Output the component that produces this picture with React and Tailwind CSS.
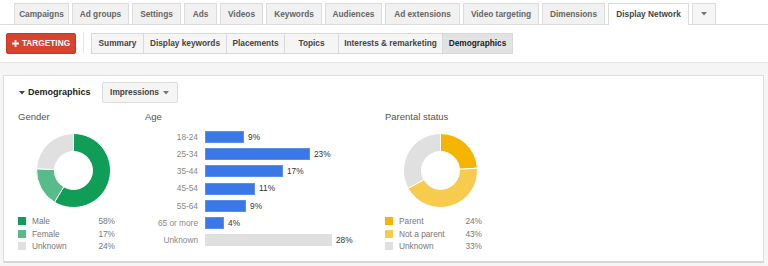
import React from "react";

const tabs = [
  { label: "Campaigns", w: "w-[55px]" },
  { label: "Ad groups", w: "w-[57px]" },
  { label: "Settings", w: "w-[49px]" },
  { label: "Ads", w: "w-[33px]" },
  { label: "Videos", w: "w-[43px]" },
  { label: "Keywords", w: "w-[56px]" },
  { label: "Audiences", w: "w-[57px]" },
  { label: "Ad extensions", w: "w-[75px]" },
  { label: "Video targeting", w: "w-[76px]" },
  { label: "Dimensions", w: "w-[63px]" },
  { label: "Display Network", w: "w-[81px]", active: true },
];

const subTabs = [
  { label: "Summary", w: "w-[53px]" },
  { label: "Display keywords", w: "w-[83px]" },
  { label: "Placements", w: "w-[58px]" },
  { label: "Topics", w: "w-[54px]" },
  { label: "Interests & remarketing", w: "w-[104px]" },
  { label: "Demographics", w: "w-[70px]", active: true },
];

const gender = [
  { label: "Male", value: 58, color: "#0f9d58", sq: "bg-[#0f9d58]" },
  { label: "Female", value: 17, color: "#57bb8a", sq: "bg-[#57bb8a]" },
  { label: "Unknown", value: 24, color: "#e0e0e0", sq: "bg-[#e0e0e0]" },
];

const parental = [
  { label: "Parent", value: 24, color: "#f4b400", sq: "bg-[#f4b400]" },
  { label: "Not a parent", value: 43, color: "#f7cb4d", sq: "bg-[#f7cb4d]" },
  { label: "Unknown", value: 33, color: "#e0e0e0", sq: "bg-[#e0e0e0]" },
];

const ages = [
  { label: "18-24", value: 9, w: 39 },
  { label: "25-34", value: 23, w: 105 },
  { label: "35-44", value: 17, w: 78 },
  { label: "45-54", value: 11, w: 50 },
  { label: "55-64", value: 9, w: 41 },
  { label: "65 or more", value: 4, w: 19 },
  { label: "Unknown", value: 28, w: 127, grey: true },
];

function pt(cx, cy, rad, t) {
  const a = 2 * Math.PI * t;
  return [cx + rad * Math.sin(a), cy - rad * Math.cos(a)];
}

function sector(cx, cy, R, r, t0, t1) {
  const large = t1 - t0 > 0.5 ? 1 : 0;
  const [x0, y0] = pt(cx, cy, R, t0);
  const [x1, y1] = pt(cx, cy, R, t1);
  const [x2, y2] = pt(cx, cy, r, t1);
  const [x3, y3] = pt(cx, cy, r, t0);
  return `M${x0} ${y0} A${R} ${R} 0 ${large} 1 ${x1} ${y1} L${x2} ${y2} A${r} ${r} 0 ${large} 0 ${x3} ${y3} Z`;
}

function Donut({ data }) {
  const total = data.reduce((s, d) => s + d.value, 0);
  let acc = 0;
  return (
    <svg width="75" height="75" viewBox="0 0 75 75">
      {data.map((d) => {
        const t0 = acc / total;
        acc += d.value;
        const t1 = acc / total;
        return (
          <path key={d.label} d={sector(37.5, 37.5, 37, 19, t0, t1)} fill={d.color} stroke="#fff" strokeWidth="1" />
        );
      })}
    </svg>
  );
}

function PieBlock({ title, data }) {
  return (
    <div className="w-[97px] flex flex-col">
      <div className="h-[12px] leading-[12px] text-[9.5px] text-[#555]">{title}</div>
      <div className="mt-[10px] ml-[18px]">
        <Donut data={data} />
      </div>
      <div className="mt-[7px] flex flex-col">
        {data.map((d) => (
          <div key={d.label} className="h-[12.5px] flex items-center text-[8.3px] text-[#777]">
            <div className={`w-[8px] h-[8px] ${d.sq}`} />
            <span className="ml-[6px] flex-1">{d.label}</span>
            <span>{d.value}%</span>
          </div>
        ))}
      </div>
    </div>
  );
}

export default function App() {
  return (
    <div className="w-[768px] h-[266px] bg-white overflow-hidden font-['Liberation_Sans',Arial,sans-serif] flex flex-col">
      {/* Top tabs */}
      <div className="h-[25px] shrink-0 border-b border-[#dcdcdc] flex items-end pl-[14px] gap-[3px]">
        {tabs.map((t) => (
          <div
            key={t.label}
            className={`${t.w} flex items-center justify-center border border-b-0 border-[#dcdcdc] text-[8.3px] font-bold ${
              t.active ? "h-[22px] -mb-px bg-white text-[#444]" : "h-[21px] bg-[#f1f1f1] text-[#666]"
            }`}
          >
            {t.label}
          </div>
        ))}
        <div className="w-[24px] h-[21px] border border-b-0 border-[#dcdcdc] bg-[#f6f6f6] flex items-center justify-center">
          <svg width="6" height="4" viewBox="0 0 6 4">
            <path d="M0 0h6L3 3.5z" fill="#777" />
          </svg>
        </div>
      </div>

      {/* Sub tabs */}
      <div className="mt-[8px] h-[21px] shrink-0 flex items-stretch">
        <div className="ml-[6px] w-[70px] bg-[#d8432f] border border-[#c53727] rounded-[2px] flex items-center justify-center text-white text-[8.3px] font-bold">
          <svg width="7" height="7" viewBox="0 0 7 7" className="mr-[3px]">
            <path d="M2.6 0h1.8v2.6H7v1.8H4.4V7H2.6V4.4H0V2.6h2.6z" fill="#fff" />
          </svg>
          TARGETING
        </div>
        <div className="ml-[7px] w-px -mt-px h-[22px] bg-[#e6e6e6]" />
        <div className="ml-[7px] flex">
          {subTabs.map((t, i) => (
            <div
              key={t.label}
              className={`${t.w} flex items-center justify-center border border-[#d9d9d9] text-[8.3px] font-bold ${
                i > 0 ? "border-l-0" : ""
              } ${t.active ? "bg-[#e2e2e2] text-[#222]" : "bg-[#f5f5f5] text-[#444]"}`}
            >
              {t.label}
            </div>
          ))}
        </div>
      </div>

      {/* Content area */}
      <div className="mt-[8px] flex-1 bg-[#f5f5f5] border-t border-[#e4e4e4] pt-[12px] px-[3px]">
        <div className="w-[761px] h-[188px] bg-white border border-[#dedede] border-b-2 border-b-[#d6d6d6] pl-[14px] pt-[6px]">
          <div className="h-[21px] flex items-center">
            <svg width="6" height="4" viewBox="0 0 6 4" className="ml-[1px]">
              <path d="M0 0h6L3 3.5z" fill="#444" />
            </svg>
            <span className="ml-[3px] text-[9px] font-bold text-[#222]">Demographics</span>
            <div className="ml-[11px] w-[76px] h-[21px] bg-[#f5f5f5] border border-[#dcdcdc] rounded-[2px] flex items-center justify-center text-[8.3px] font-bold text-[#444]">
              Impressions
              <svg width="6" height="4" viewBox="0 0 6 4" className="ml-[4px]">
                <path d="M0 0h6L3 3.5z" fill="#777" />
              </svg>
            </div>
          </div>

          <div className="mt-[8px] flex">
            <PieBlock title="Gender" data={gender} />

            <div className="ml-[30px] w-[240px] flex flex-col">
              <div className="h-[12px] leading-[12px] text-[9.5px] text-[#555]">Age</div>
              <div className="mt-[8px] flex flex-col gap-[5.2px]">
                {ages.map((a) => (
                  <div key={a.label} className="h-[12px] flex items-center">
                    <div className="w-[53px] text-right text-[8.3px] text-[#888]">{a.label}</div>
                    <div
                      className={`ml-[7px] h-[12px] ${
                        a.grey ? "bg-[#e0e0e0]" : "bg-[#3b78e7] border border-[#5b8ff0]"
                      }`}
                      style={{ width: a.w }}
                    />
                    <span className="ml-[4px] text-[8.3px] text-[#333]">{a.value}%</span>
                  </div>
                ))}
              </div>
            </div>

            <PieBlock title="Parental status" data={parental} />
          </div>
        </div>
      </div>
    </div>
  );
}
